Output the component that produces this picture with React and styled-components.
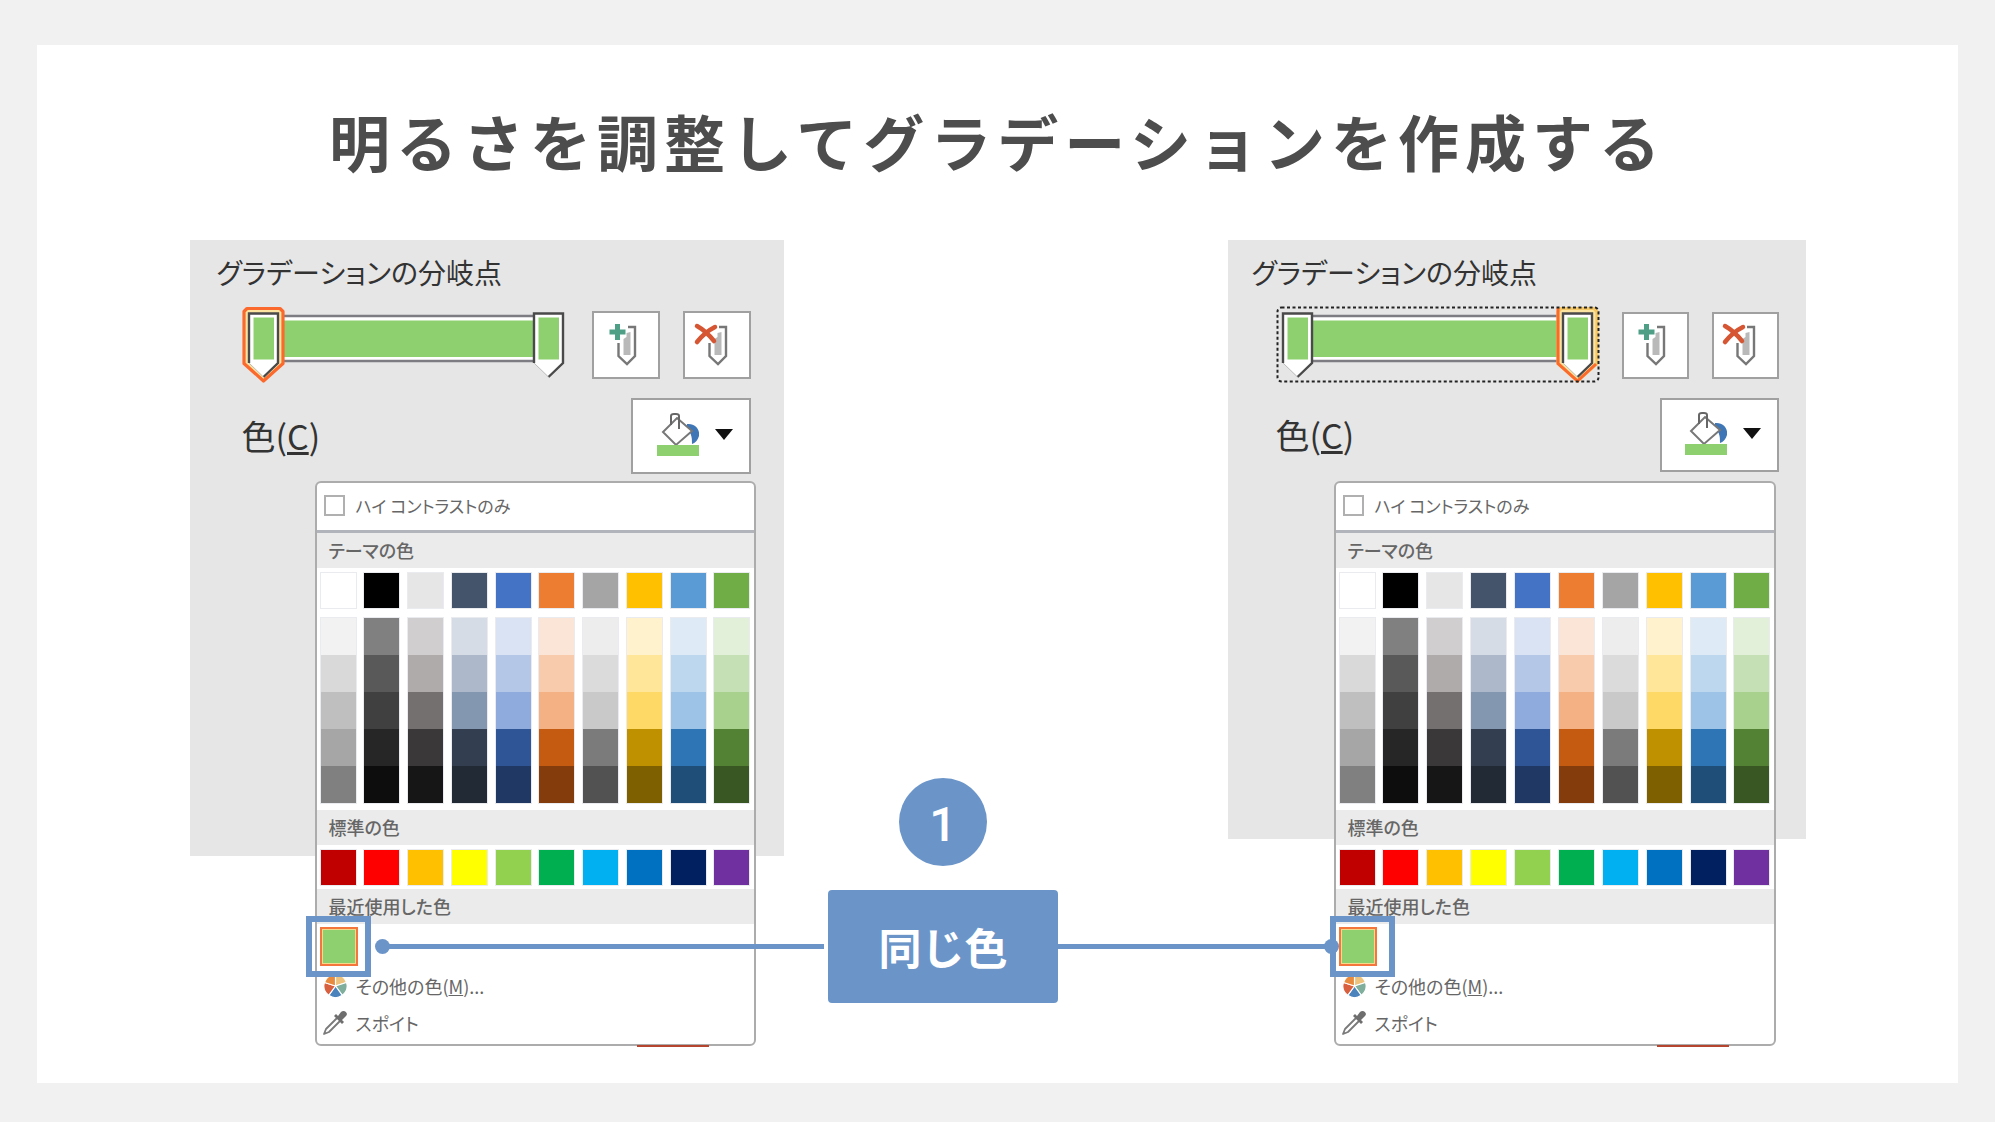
import React, { useId } from "react";
import styled, { createGlobalStyle, css } from "styled-components";

const BLUE = "#6b95c9";
const GREEN = "#8ed06f";

const GlobalStyle = createGlobalStyle`
  *, *::before, *::after { box-sizing: border-box; }
  body {
    margin: 0;
    background: #f1f1f1;
    font-family: "Noto Sans CJK JP", "Noto Sans", sans-serif;
  }
  button { font: inherit; color: inherit; margin: 0; cursor: pointer; }
`;

const Page = styled.div`
  display: flex;
  min-height: 100vh;
  padding: 45px 37px 39px;
`;

const Card = styled.main`
  flex: 1;
  display: flex;
  flex-direction: column;
  align-items: center;
  padding: 52px 0 36px;
  background: #fff;
`;

const Title = styled.h1`
  margin: 0;
  font-size: 61px;
  line-height: 88px;
  letter-spacing: 6px;
  font-weight: 700;
  color: #4d4d4d;
  white-space: nowrap;
`;

const Stage = styled.div`
  display: flex;
  justify-content: space-between;
  align-items: stretch;
  width: 84%;
  min-width: 1616px;
  margin-top: 55px;
`;

const Panel = styled.section`
  flex: none;
  display: flex;
  flex-direction: column;
  width: ${(p) => (p.$small ? 578 : 594)}px;
  padding-top: 12px;
  background: linear-gradient(#e6e6e6, #e6e6e6) no-repeat 0 0 / 100%
    calc(100% - ${(p) => (p.$small ? 207 : 190)}px);
`;

const PanelTitle = styled.h2`
  margin: 0;
  padding-left: ${(p) => (p.$small ? 24 : 27)}px;
  font-size: 28px;
  line-height: 40px;
  font-weight: 400;
  color: #333;
  font-feature-settings: "palt";
`;

const ControlRow = styled.div`
  display: flex;
  align-items: center;
  justify-content: space-between;
  margin-top: 14px;
  padding: ${(p) => (p.$small ? "0 27px 0 48px" : "0 33px 0 52px")};
`;

const ButtonGroup = styled.div`
  display: flex;
  gap: 23px;
`;

const SquareButton = styled.button`
  display: grid;
  place-items: center;
  width: ${(p) => (p.$small ? 67 : 68)}px;
  height: ${(p) => (p.$small ? 67 : 68)}px;
  padding: 0;
  border: 2px solid #a0a0a0;
  background: #fff;
`;

const FillButton = styled.button`
  display: flex;
  align-items: center;
  justify-content: center;
  gap: 16px;
  width: ${(p) => (p.$small ? 119 : 120)}px;
  height: ${(p) => (p.$small ? 74 : 76)}px;
  padding: 0 0 4px 8px;
  border: 2px solid #a0a0a0;
  background: #fff;
`;

const FieldLabel = styled.span`
  font-size: 34px;
  line-height: 48px;
  color: #333;
`;

const Track = styled.div`
  position: relative;
  width: 324px;
  height: 78px;
`;

const HiddenRange = styled.input`
  position: absolute;
  inset: 0 ${(p) => (p.$end ? "0" : "50%")} 0 ${(p) => (p.$end ? "50%" : "0")};
  width: 50%;
  height: 100%;
  margin: 0;
  opacity: 0;
`;

const Popup = styled.div`
  display: flex;
  flex-direction: column;
  margin: ${(p) => (p.$small ? "9px 30px 0 106px" : "7px 28px 0 125px")};
  padding-bottom: 2px;
  border: 2px solid #acacac;
  border-radius: 6px;
  background: #fff;
  font-size: 18px;
  color: #666;
  font-feature-settings: "palt";
`;

const ContrastRow = styled.label`
  display: flex;
  align-items: center;
  gap: 11px;
  height: 50px;
  padding: 0 7px 2px;
  border-bottom: 3px solid #b1b4ba;
  font-size: 17px;
`;

const Checkbox = styled.input`
  appearance: none;
  width: 21px;
  height: 21px;
  margin: 0;
  border: 2px solid #b0b0b0;
  background: #fff;
`;

const SectionTitle = styled.h3`
  margin: 0;
  padding-left: 12px;
  font-size: 18px;
  line-height: 35px;
  font-weight: 500;
  background: #ebebeb;
`;

const SwatchRow = styled.div`
  display: flex;
  justify-content: space-between;
  padding: ${(p) => p.$pad};
`;

const swatch = css`
  display: block;
  width: 35px;
  padding: 0;
  border: 0;
  background: ${(p) => p.$color};
`;

const Swatch = styled.button`
  ${swatch}
  height: 35px;
  box-shadow: 0 0 0 1px #e9ebee;
`;

const ShadeColumn = styled.div`
  display: flex;
  flex-direction: column;
  box-shadow: 0 0 0 1px #e9ebee;
`;

const Shade = styled.button`
  ${swatch}
  height: 37px;
`;

const RecentRow = styled.div`
  display: flex;
  padding: 3px 3px 2px;
`;

const RecentMark = styled.div`
  position: relative;
`;

const RecentSwatch = styled.button`
  display: block;
  width: 38px;
  height: 39px;
  padding: 0;
  border: 2px solid #f4763c;
  box-shadow: inset 0 0 0 1px #f3d98a;
  background: ${GREEN};
`;

const Highlight = styled.span`
  position: absolute;
  top: -11px;
  left: ${(p) => (p.$small ? -9 : -14)}px;
  width: 65px;
  height: 61px;
  border: 6px solid ${BLUE};
  pointer-events: none;
`;

const MenuItem = styled.button`
  display: flex;
  align-items: center;
  gap: 8px;
  height: 37px;
  padding: 0 6px 2px;
  border: 0;
  background: none;
  text-align: left;
  font-feature-settings: "palt";
`;

const PageEdge = styled.span`
  width: 72px;
  height: 2px;
  margin: -1px ${(p) => (p.$small ? 77 : 75)}px -1px auto;
  background: #b5452f;
`;

const Callout = styled.div`
  display: flex;
  flex-direction: column;
  justify-content: flex-end;
  align-items: center;
  gap: 24px;
  margin: 0 125px 43px 0;
`;

const StepNumber = styled.span`
  display: grid;
  place-items: center;
  width: 88px;
  height: 88px;
  padding-top: 5px;
  border-radius: 50%;
  background: ${BLUE};
  color: #fff;
  font: 500 48px/1 Roboto, sans-serif;
`;

const CalloutBox = styled.div`
  position: relative;
  width: 230px;
  border-radius: 4px;
  background: ${BLUE};
  color: #fff;
  font-size: 43px;
  line-height: 113px;
  font-weight: 700;
  text-align: center;
`;

const Connector = styled.span`
  position: absolute;
  top: 54px;
  height: 5px;
  background: ${BLUE};
  ${(p) =>
    p.$end
      ? "left: 100%; width: 274px;"
      : "right: calc(100% + 4px); width: 442px;"}

  &::after {
    content: "";
    position: absolute;
    top: -5px;
    ${(p) => (p.$end ? "right" : "left")}: -7px;
    width: 15px;
    height: 15px;
    border-radius: 50%;
    background: ${BLUE};
  }
`;

const THEME = ["#ffffff", "#000000", "#e7e6e6", "#44546a", "#4472c4", "#ed7d31", "#a5a5a5", "#ffc000", "#5b9bd5", "#70ad47"];
const SHADES = [
  ["#f2f2f2", "#d9d9d9", "#bfbfbf", "#a6a6a6", "#808080"],
  ["#808080", "#595959", "#404040", "#262626", "#0d0d0d"],
  ["#d0cece", "#aeabaa", "#757070", "#3a3838", "#171616"],
  ["#d6dce5", "#adb9ca", "#8497b0", "#333f50", "#222a35"],
  ["#dae3f3", "#b4c7e7", "#8faadc", "#2f5597", "#203864"],
  ["#fbe5d6", "#f8cbad", "#f4b183", "#c55a11", "#843c0c"],
  ["#ededed", "#dbdbdb", "#c9c9c9", "#7b7b7b", "#525252"],
  ["#fff2cc", "#ffe699", "#ffd966", "#bf9000", "#7f6000"],
  ["#deebf7", "#bdd7ee", "#9dc3e6", "#2e75b6", "#1f4e79"],
  ["#e2f0d9", "#c5e0b4", "#a9d18e", "#548235", "#385723"],
];
const STANDARD = ["#c00000", "#ff0000", "#ffc000", "#ffff00", "#92d050", "#00b050", "#00b0f0", "#0070c0", "#002060", "#7030a0"];

function Stop({ x, selected, partial }) {
  return (
    <g transform={`translate(${x} 0)`}>
      {selected && (
        <>
          <path
            d="M5 2.500H38L41 5.500V57.500L21.500 75L2 57.500V5.500Z"
            fill="#fbe3a0"
            stroke={partial ? "#f6c765" : "#fb6a2c"}
            strokeWidth="3.200"
            strokeLinejoin="round"
          />
          {partial && <path d="M2 2V57.500L21.500 75L40 58" fill="none" stroke="#fb6a2c" strokeWidth="3" />}
        </>
      )}
      <path d="M7 7.500H36V57L21.500 71L7 57Z" fill="#fff" />
      <path d="M7 57V7.500H36V57L21.500 71" fill="none" stroke="#4a4a4a" strokeWidth="2.400" />
      <path d="M7 57L21.500 71" stroke="#bbb" strokeWidth="1" />
      <rect x="11.500" y="11.500" width="20.500" height="42" fill={GREEN} />
    </g>
  );
}

function GradientSlider({ small }) {
  return (
    <Track>
      <svg width="324" height="78" viewBox="0 0 324 78" aria-hidden="true">
        <rect x="20" y="10" width="282" height="45" fill="#fff" stroke="#7c7c82" strokeWidth="2.500" />
        <rect x="20" y="14.500" width="282" height="36.500" fill={GREEN} />
        {small ? (
          <>
            <Stop x={0} />
            <Stop x={280} selected partial />
            <rect x="1.500" y="1.500" width="321" height="74" rx="4" fill="none" stroke="#222" strokeWidth="2" strokeDasharray="3 2.500" />
          </>
        ) : (
          <>
            <Stop x={0} selected />
            <Stop x={285} />
          </>
        )}
      </svg>
      <HiddenRange type="range" aria-label="分岐点 1" defaultValue={0} />
      <HiddenRange type="range" aria-label="分岐点 2" defaultValue={100} $end />
    </Track>
  );
}

function PinIcon({ remove }) {
  return (
    <svg width="34" height="44" viewBox="0 0 34 44" overflow="visible" aria-hidden="true">
      <path d="M19 4H26V33L18 41L9.500 33V20" fill="none" stroke="#777" strokeWidth="2.400" />
      <path d="M14.500 16L17.500 14V10L21.500 9V32H14.500Z" fill="#b9b9b9" />
      {remove ? (
        <path d="M-3 3Q6 8 14 18M15 4Q5 9 -3 19" fill="none" stroke="#d65532" strokeWidth="4.500" strokeLinecap="round" />
      ) : (
        <path d="M8.500 1V17M0.500 9H16.500" stroke="#4f9f87" strokeWidth="5" />
      )}
    </svg>
  );
}

function BucketIcon() {
  return (
    <svg width="42" height="44" viewBox="0 0 42 44" aria-hidden="true">
      <path d="M30 12C38 11 43 17 42 24C41 28 38 31 35 32C35 26 35 22 30 17Z" fill="#3f76b5" />
      <path d="M20 6L35 19L19 33L6 20Z" fill="#fff" stroke="#777" strokeWidth="2" />
      <path d="M14 13V4Q14 2 17 2H19Q22 2 22 4V17" fill="none" stroke="#666" strokeWidth="2" />
      <rect y="33" width="42" height="11" fill={GREEN} />
    </svg>
  );
}

function ArrowIcon() {
  return (
    <svg width="18" height="11" viewBox="0 0 18 11" aria-hidden="true">
      <path d="M0 0H18L9 11Z" fill="#111" />
    </svg>
  );
}

function WheelIcon() {
  const colors = ["#ecc27c", "#7fae9c", "#4b83bd", "#d9603f", "#e98b3e"];
  const point = (deg) => {
    const a = ((deg - 90) * Math.PI) / 180;
    return `${13 + 12 * Math.cos(a)} ${12 + 12 * Math.sin(a)}`;
  };
  return (
    <svg width="25" height="24" viewBox="0 0 26 24" aria-hidden="true">
      {colors.map((color, i) => (
        <path key={color} d={`M13 12L${point(i * 72)}A12 12 0 0 1 ${point(i * 72 + 72)}Z`} fill={color} stroke="#fff" strokeWidth="1.200" />
      ))}
    </svg>
  );
}

function DropperIcon() {
  return (
    <svg width="25" height="25" viewBox="0 0 25 25" aria-hidden="true">
      <path d="M14 8L3 19L1 24L6 22L17 11" fill="#fff" stroke="#7a7a7a" strokeWidth="1.800" strokeLinejoin="round" />
      <path d="M11 6L13 4L15 6L18 2C21 -1 26 3 23 6L19 10L21 12L19 14Z" fill="#6e6e6e" />
    </svg>
  );
}

function ColorPopup({ small }) {
  const id = useId();
  return (
    <Popup $small={small}>
      <ContrastRow htmlFor={id}>
        <Checkbox type="checkbox" id={id} />
        ハイ コントラストのみ
      </ContrastRow>
      <SectionTitle>テーマの色</SectionTitle>
      <SwatchRow $pad="5px 4px 0">
        {THEME.map((c) => <Swatch key={c} $color={c} aria-label={c} />)}
      </SwatchRow>
      <SwatchRow $pad="10px 4px 7px">
        {SHADES.map((column, i) => (
          <ShadeColumn key={i}>
            {column.map((c) => <Shade key={c} $color={c} aria-label={c} />)}
          </ShadeColumn>
        ))}
      </SwatchRow>
      <SectionTitle>標準の色</SectionTitle>
      <SwatchRow $pad="5px 4px 4px">
        {STANDARD.map((c) => <Swatch key={c} $color={c} aria-label={c} />)}
      </SwatchRow>
      <SectionTitle>最近使用した色</SectionTitle>
      <RecentRow>
        <RecentMark>
          <RecentSwatch aria-label={GREEN} />
          <Highlight $small={small} />
        </RecentMark>
      </RecentRow>
      <MenuItem>
        <WheelIcon />
        <span>その他の色(<u>M</u>)...</span>
      </MenuItem>
      <MenuItem>
        <DropperIcon />
        <span>スポイト</span>
      </MenuItem>
    </Popup>
  );
}

function GradientPanel({ small }) {
  return (
    <Panel $small={small}>
      <PanelTitle $small={small}>グラデーションの分岐点</PanelTitle>
      <ControlRow $small={small}>
        <GradientSlider small={small} />
        <ButtonGroup>
          <SquareButton $small={small} aria-label="分岐点を追加"><PinIcon /></SquareButton>
          <SquareButton $small={small} aria-label="分岐点を削除"><PinIcon remove /></SquareButton>
        </ButtonGroup>
      </ControlRow>
      <ControlRow $small={small}>
        <FieldLabel>色(<u>C</u>)</FieldLabel>
        <FillButton $small={small} aria-label="色">
          <BucketIcon />
          <ArrowIcon />
        </FillButton>
      </ControlRow>
      <ColorPopup small={small} />
      <PageEdge $small={small} />
    </Panel>
  );
}

export default function App() {
  return (
    <>
      <GlobalStyle />
      <Page>
        <Card>
          <Title>明るさを調整してグラデーションを作成する</Title>
          <Stage>
            <GradientPanel />
            <Callout>
              <StepNumber>1</StepNumber>
              <CalloutBox>
                同じ色
                <Connector />
                <Connector $end />
              </CalloutBox>
            </Callout>
            <GradientPanel small />
          </Stage>
        </Card>
      </Page>
    </>
  );
}
